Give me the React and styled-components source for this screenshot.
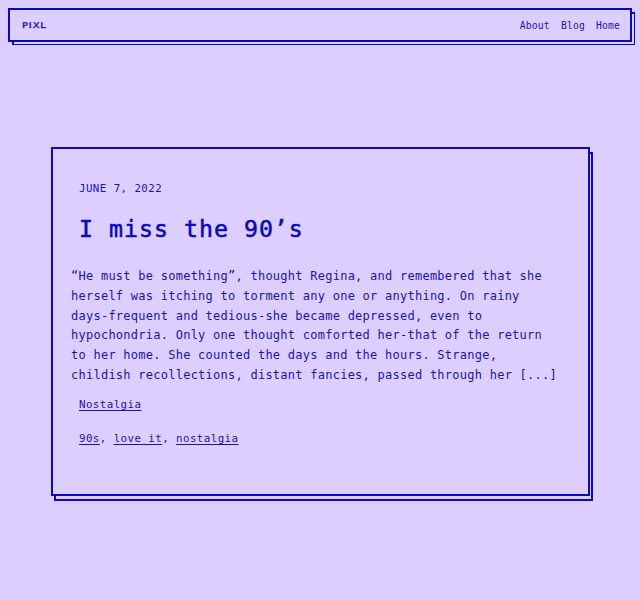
import React from "react";
import styled, { createGlobalStyle } from "styled-components";

const paper = "#dccfff";
const ink = "#0a0ab8";

const GlobalStyle = createGlobalStyle`
  * { box-sizing: border-box; }
  body {
    margin: 0;
    background: ${paper};
    color: #2014a6;
    font-family: "DejaVu Sans Mono", monospace;
  }
`;

const Page = styled.div`
  min-height: 600px;
  padding: 8px;
  display: flex;
  flex-direction: column;
`;

/* Outlined panel with a second, offset outline behind it. */
const Panel = styled.div`
  position: relative;
  border: 2px solid ${ink};

  &::before {
    content: "";
    position: absolute;
    border: solid ${ink};
    border-width: 0 ${(p) => p.$line}px ${(p) => p.$line}px 0;
    pointer-events: none;
    inset: ${(p) => p.$inset};
  }

  &::after {
    content: "";
    position: absolute;
    pointer-events: none;
    inset: ${(p) => p.$inset};
    background:
      linear-gradient(${ink}, ${ink}) left bottom / 2px ${(p) => p.$capY}px no-repeat,
      linear-gradient(${ink}, ${ink}) right top / ${(p) => p.$capX}px 2px no-repeat;
  }
`;

const Header = styled(Panel)`
  display: flex;
  align-items: center;
  justify-content: space-between;
  height: 34px;
  padding: 2px 10px 0 11.5px;
`;

const Logo = styled.a`
  display: block;
  font: 7.8px/16px "DejaVu Sans", sans-serif;
  letter-spacing: 0.7px;
  color: #2117b5;
  -webkit-text-stroke: 0.35px #2117b5;
  transform: scaleX(1.27);
  transform-origin: left center;
`;

const Nav = styled.nav`
  display: flex;
  gap: 11px;
  font-size: 9.7px;
  line-height: 16px;
  letter-spacing: 0.18px;
`;

const NavLink = styled.a`
  color: inherit;
`;

const Card = styled(Panel)`
  width: 539px;
  height: 349px;
  margin: 105px 0 0 43px;
  padding: 32px 18px 0;
`;

const Meta = styled.div`
  height: 16px;
  margin-top: ${(p) => p.$top || 0}px;
  padding-left: 8px;
  font-size: 10.8px;
  line-height: 16px;
  letter-spacing: 0.43px;
`;

const Title = styled.h2`
  margin: 15px 0 0;
  padding-left: 8px;
  font-size: 23.2px;
  line-height: 34px;
  font-weight: normal;
  letter-spacing: 1.03px;
  color: ${ink};
  -webkit-text-stroke: 0.55px ${ink};
`;

const Excerpt = styled.p`
  margin: 21px 0 0;
  font-size: 12px;
  line-height: 19.8px;
  letter-spacing: 0.252px;
  white-space: nowrap;
`;

const TagLink = styled.a`
  text-decoration: underline;
  text-decoration-thickness: 1px;
  text-underline-offset: 2px;
  text-decoration-skip-ink: none;
`;

const lines = [
  "“He must be something”, thought Regina, and remembered that she",
  "herself was itching to torment any one or anything. On rainy",
  "days-frequent and tedious-she became depressed, even to",
  "hypochondria. Only one thought comforted her-that of the return",
  "to her home. She counted the days and the hours. Strange,",
  "childish recollections, distant fancies, passed through her [...]",
];

export default function App() {
  return (
    <>
      <GlobalStyle />
      <Page>
        <Header as="header" $inset="2px -5px -5px 2px" $line={1} $capX={3} $capY={3}>
          <Logo>PIXL</Logo>
          <Nav>
            <NavLink>About</NavLink>
            <NavLink>Blog</NavLink>
            <NavLink>Home</NavLink>
          </Nav>
        </Header>
        <Card as="article" $inset="3px -5px -7px 1px" $line={2} $capX={4} $capY={6}>
          <Meta>JUNE 7, 2022</Meta>
          <Title>I miss the 90’s</Title>
          <Excerpt>
            {lines.map((line) => (
              <React.Fragment key={line}>
                {line}
                <br />
              </React.Fragment>
            ))}
          </Excerpt>
          <Meta $top={11}>
            <TagLink>Nostalgia</TagLink>
          </Meta>
          <Meta $top={18}>
            <TagLink>90s</TagLink>, <TagLink>love it</TagLink>, <TagLink>nostalgia</TagLink>
          </Meta>
        </Card>
      </Page>
    </>
  );
}
